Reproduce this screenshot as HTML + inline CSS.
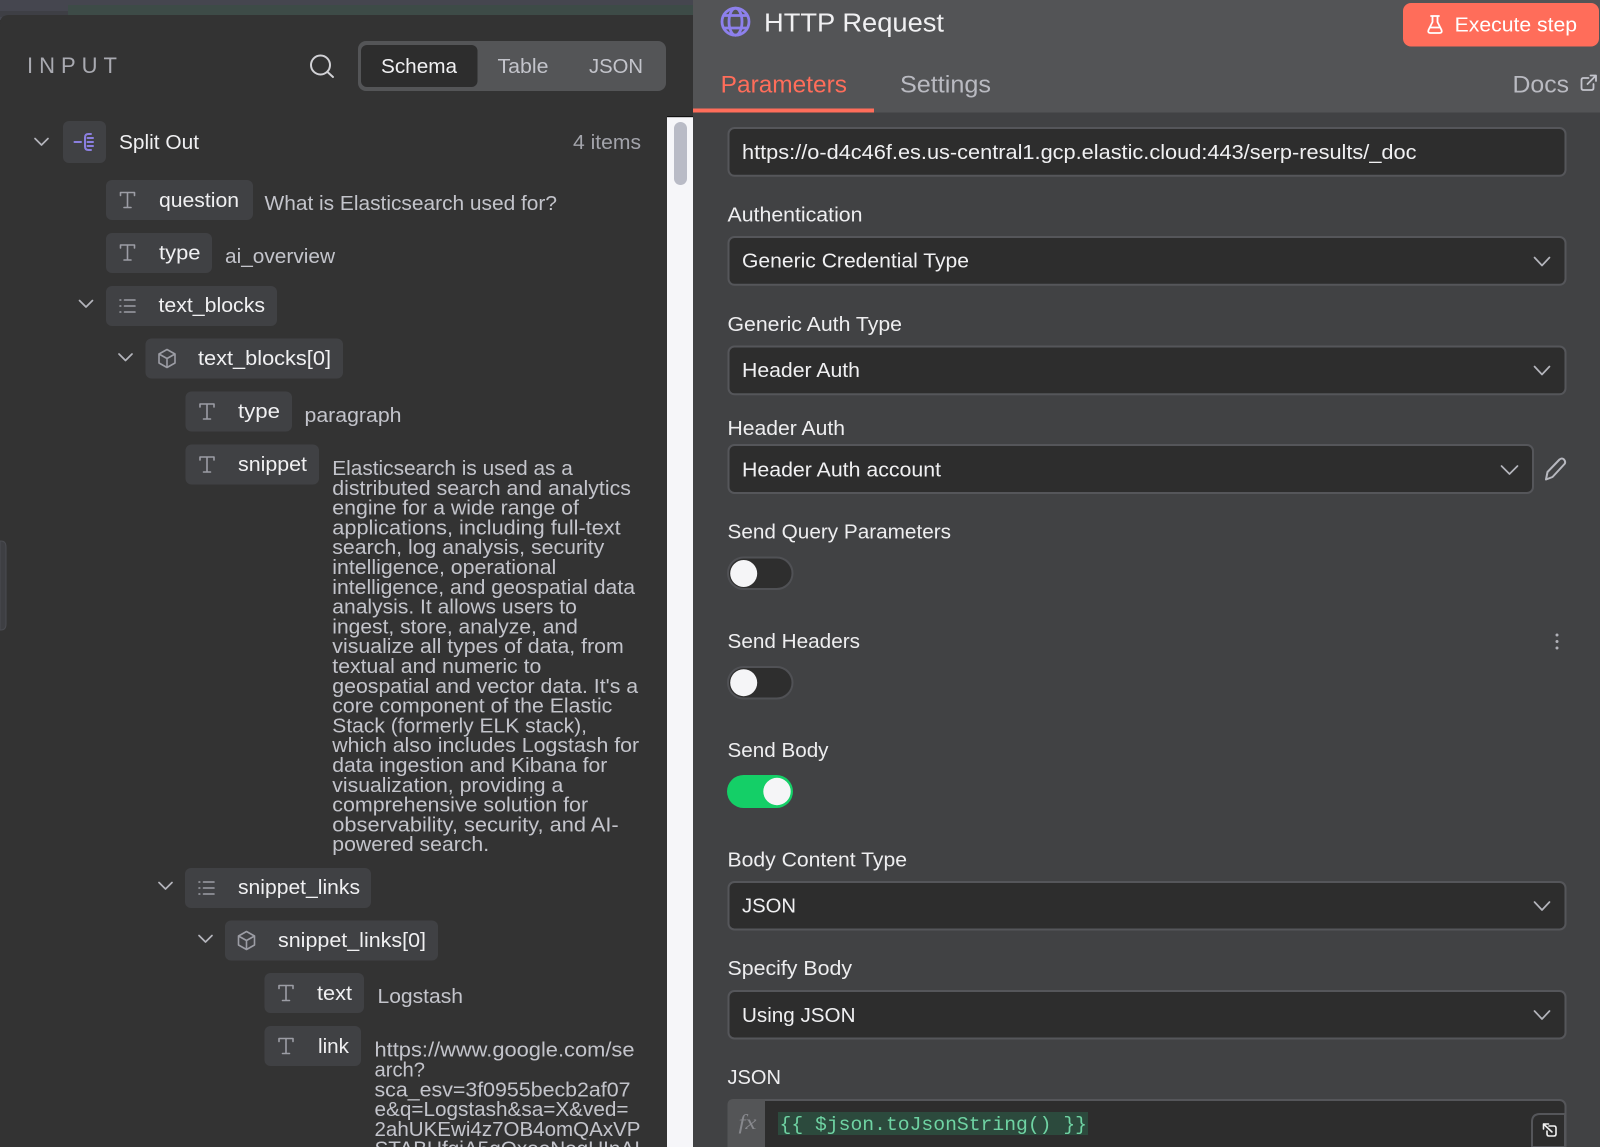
<!DOCTYPE html>
<html lang="en">
<head>
<meta charset="utf-8">
<title>HTTP Request</title>
<style>
html,body{margin:0;padding:0;background:#333;width:1600px;height:1147px;overflow:hidden}
svg{display:block}
text{font-family:"Liberation Sans",sans-serif;font-size:20.4px;fill:#f0f0f2;white-space:pre}
.v{fill:#c3c4cb}
.g{fill:#a3a4ab}
.l{fill:#eeeef0}
.i{fill:none;stroke:#9c9da5;stroke-width:1.6;stroke-linecap:round;stroke-linejoin:round}
.c{fill:none;stroke:#b4b5bc;stroke-width:1.7;stroke-linecap:round;stroke-linejoin:round}
.p{fill:#404144}
.s{fill:#2d2d2d;stroke:#55565a;stroke-width:2}
.t{fill:#2e2e2e;stroke:#505155;stroke-width:2}
</style>
</head>
<body>
<svg width="1600" height="1147" viewBox="0 0 1600 1147" xmlns="http://www.w3.org/2000/svg">
<!-- top strip -->
<rect x="0" y="0" width="1600" height="20" fill="#45464f"/>
<rect x="68" y="5" width="625" height="12" fill="#3d4b47"/>
<rect x="0" y="11" width="68" height="6" fill="#3e3f45"/>
<!-- left panel -->
<path d="M0 24 Q0 15 9 15 H693 V1147 H0 Z" fill="#333333"/>
<!-- left handle -->
<path d="M0 541 H1 Q6 541 6 547 V624 Q6 630 1 630 H0 Z" fill="#3e3f43" stroke="#4a4b50" stroke-width="1"/>
<!-- white scroll area -->
<rect x="667" y="116.500" width="26" height="1031" fill="#f6f6f9"/>
<rect x="667" y="116" width="26" height="1.200" fill="#111"/>
<rect x="674" y="122" width="13" height="63" rx="6.500" fill="#b9bbc6"/>
<!-- input header -->
<text x="27" y="73" style="font-size:22px;fill:#a9aab1" textLength="90" lengthAdjust="spacing">INPUT</text>
<circle cx="320.500" cy="65" r="9.500" fill="none" stroke="#d2d2d6" stroke-width="2"/>
<path d="M327.500 72 L333 77" fill="none" stroke="#d2d2d6" stroke-width="2" stroke-linecap="round"/>
<rect x="358" y="41" width="308" height="50" rx="8" fill="#545557"/>
<rect x="361" y="45" width="116.500" height="42" rx="6" fill="#2d2d2d"/>
<text x="381" y="73" textLength="76" lengthAdjust="spacingAndGlyphs">Schema</text>
<text x="497.500" y="73" class="v" textLength="51" lengthAdjust="spacingAndGlyphs">Table</text>
<text x="589" y="73" class="v" textLength="54" lengthAdjust="spacingAndGlyphs">JSON</text>

<!-- tree -->
<path class="c" d="M35 138.500 L41.500 145 L48 138.500"/>
<rect x="63" y="121" width="43" height="42" rx="6" class="p"/>
<path d="M74.500 142 H81 M91 134 H88.500 Q85 134 85 137.500 V146.500 Q85 150 88.500 150 H91 M87.500 138 H93 M87.500 142 H93 M87.500 146 H93" fill="none" stroke="#8b7fe0" stroke-width="2" stroke-linecap="round"/>
<text x="119" y="149" textLength="80" lengthAdjust="spacingAndGlyphs">Split Out</text>
<text x="573" y="149" class="g" textLength="68" lengthAdjust="spacingAndGlyphs">4 items</text>

<!-- question -->
<rect x="106" y="180" width="147" height="40" rx="6" class="p"/>
<path class="i" d="M120.500 195.500 V192.500 H134.500 V195.500 M127.500 192.500 V207.500 M124 207.500 H131"/>
<text x="159" y="207" textLength="80" lengthAdjust="spacingAndGlyphs">question</text>
<text x="264.500" y="210" class="v" textLength="292.500" lengthAdjust="spacingAndGlyphs">What is Elasticsearch used for?</text>
<!-- type -->
<rect x="106" y="233" width="106" height="40" rx="6" class="p"/>
<path class="i" d="M120.500 248 V245 H134.500 V248 M127.500 245 V260 M124 260 H131"/>
<text x="159" y="259.500" textLength="41.500" lengthAdjust="spacingAndGlyphs">type</text>
<text x="225" y="263" class="v" textLength="110" lengthAdjust="spacingAndGlyphs">ai_overview</text>
<!-- text_blocks -->
<path class="c" d="M79.500 300.500 L86 307 L92.500 300.500"/>
<rect x="106" y="286" width="171" height="40" rx="6" class="p"/>
<path class="i" d="M124.500 300 H135 M124.500 306 H135 M124.500 312 H135 M120 300 H120.800 M120 306 H120.800 M120 312 H120.800"/>
<text x="158.500" y="312" textLength="106.500" lengthAdjust="spacingAndGlyphs">text_blocks</text>
<!-- text_blocks[0] -->
<path class="c" d="M119 354 L125.500 360.500 L132 354"/>
<rect x="145.500" y="338.500" width="197.500" height="40" rx="6" class="p"/>
<path class="i" d="M167 349.500 L175 354 V363 L167 367.500 L159 363 V354 Z M159 354 L167 358.500 L175 354 M167 358.500 V367.500"/>
<text x="198" y="365" textLength="133" lengthAdjust="spacingAndGlyphs">text_blocks[0]</text>
<!-- type paragraph -->
<rect x="185.500" y="391.500" width="106.500" height="40" rx="6" class="p"/>
<path class="i" d="M200 407 V404 H214 V407 M207 404 V419 M203.500 419 H210.500"/>
<text x="238" y="418" textLength="42" lengthAdjust="spacingAndGlyphs">type</text>
<text x="304.500" y="422" class="v" textLength="97" lengthAdjust="spacingAndGlyphs">paragraph</text>
<!-- snippet -->
<rect x="185.500" y="444.500" width="133.500" height="40" rx="6" class="p"/>
<path class="i" d="M200 460 V457 H214 V460 M207 457 V472 M203.500 472 H210.500"/>
<text x="238" y="471" textLength="69" lengthAdjust="spacingAndGlyphs">snippet</text>
<g>
<text x="332.300" y="475" class="v" textLength="240.500" lengthAdjust="spacingAndGlyphs">Elasticsearch is used as a</text>
<text x="332.300" y="494.800" class="v" textLength="298.600" lengthAdjust="spacingAndGlyphs">distributed search and analytics</text>
<text x="332.300" y="514.600" class="v" textLength="246.600" lengthAdjust="spacingAndGlyphs">engine for a wide range of</text>
<text x="332.300" y="534.400" class="v" textLength="288.400" lengthAdjust="spacingAndGlyphs">applications, including full-text</text>
<text x="332.300" y="554.200" class="v" textLength="272" lengthAdjust="spacingAndGlyphs">search, log analysis, security</text>
<text x="332.300" y="574" class="v" textLength="224" lengthAdjust="spacingAndGlyphs">intelligence, operational</text>
<text x="332.300" y="593.800" class="v" textLength="302.700" lengthAdjust="spacingAndGlyphs">intelligence, and geospatial data</text>
<text x="332.300" y="613.600" class="v" textLength="244.500" lengthAdjust="spacingAndGlyphs">analysis. It allows users to</text>
<text x="332.300" y="633.400" class="v" textLength="245.500" lengthAdjust="spacingAndGlyphs">ingest, store, analyze, and</text>
<text x="332.300" y="653.200" class="v" textLength="291.500" lengthAdjust="spacingAndGlyphs">visualize all types of data, from</text>
<text x="332.300" y="673" class="v" textLength="209" lengthAdjust="spacingAndGlyphs">textual and numeric to</text>
<text x="332.300" y="692.800" class="v" textLength="305.800" lengthAdjust="spacingAndGlyphs">geospatial and vector data. It's a</text>
<text x="332.300" y="712.600" class="v" textLength="280" lengthAdjust="spacingAndGlyphs">core component of the Elastic</text>
<text x="332.300" y="732.400" class="v" textLength="254.700" lengthAdjust="spacingAndGlyphs">Stack (formerly ELK stack),</text>
<text x="332.300" y="752.200" class="v" textLength="306.800" lengthAdjust="spacingAndGlyphs">which also includes Logstash for</text>
<text x="332.300" y="772" class="v" textLength="275" lengthAdjust="spacingAndGlyphs">data ingestion and Kibana for</text>
<text x="332.300" y="791.800" class="v" textLength="231" lengthAdjust="spacingAndGlyphs">visualization, providing a</text>
<text x="332.300" y="811.600" class="v" textLength="255.800" lengthAdjust="spacingAndGlyphs">comprehensive solution for</text>
<text x="332.300" y="831.400" class="v" textLength="286.400" lengthAdjust="spacingAndGlyphs">observability, security, and AI-</text>
<text x="332.300" y="851.200" class="v" textLength="156.800" lengthAdjust="spacingAndGlyphs">powered search.</text>
</g>
<!-- snippet_links -->
<path class="c" d="M159 882.500 L165.500 889 L172 882.500"/>
<rect x="185" y="868" width="186" height="40" rx="6" class="p"/>
<path class="i" d="M203.500 882 H214 M203.500 888 H214 M203.500 894 H214 M199 882 H199.800 M199 888 H199.800 M199 894 H199.800"/>
<text x="238" y="894" textLength="122" lengthAdjust="spacingAndGlyphs">snippet_links</text>
<!-- snippet_links[0] -->
<path class="c" d="M199 935.500 L205.500 942 L212 935.500"/>
<rect x="225" y="920.500" width="213" height="40" rx="6" class="p"/>
<path class="i" d="M246.500 931.500 L254.500 936 V945 L246.500 949.500 L238.500 945 V936 Z M238.500 936 L246.500 940.500 L254.500 936 M246.500 940.500 V949.500"/>
<text x="278" y="947" textLength="148" lengthAdjust="spacingAndGlyphs">snippet_links[0]</text>
<!-- text -->
<rect x="264.500" y="973" width="99.500" height="40" rx="6" class="p"/>
<path class="i" d="M279 988.500 V985.500 H293 V988.500 M286 985.500 V1000.500 M282.500 1000.500 H289.500"/>
<text x="317" y="1000" textLength="35" lengthAdjust="spacingAndGlyphs">text</text>
<text x="377.500" y="1003" class="v" textLength="85.500" lengthAdjust="spacingAndGlyphs">Logstash</text>
<!-- link -->
<rect x="264.500" y="1026" width="96.500" height="40" rx="6" class="p"/>
<path class="i" d="M279 1041.500 V1038.500 H293 V1041.500 M286 1038.500 V1053.500 M282.500 1053.500 H289.500"/>
<text x="318" y="1053" textLength="31" lengthAdjust="spacingAndGlyphs">link</text>
<text x="374.500" y="1056.700" class="v" textLength="260" lengthAdjust="spacingAndGlyphs">https://www.google.com/se</text>
<text x="374.500" y="1076.500" class="v" textLength="50.500" lengthAdjust="spacingAndGlyphs">arch?</text>
<text x="374.500" y="1096.300" class="v" textLength="256" lengthAdjust="spacingAndGlyphs">sca_esv=3f0955becb2af07</text>
<text x="374.500" y="1116.100" class="v" textLength="254" lengthAdjust="spacingAndGlyphs">e&amp;q=Logstash&amp;sa=X&amp;ved=</text>
<text x="374.500" y="1135.900" class="v" textLength="266" lengthAdjust="spacingAndGlyphs">2ahUKEwi4z7OB4omQAxVP</text>
<text x="374.500" y="1155.700" class="v" textLength="265.500" lengthAdjust="spacingAndGlyphs">STABUfgiA5gQxooNogUInAI</text>

<!-- right panel -->
<rect x="693" y="0" width="907" height="1147" fill="#414244"/>
<rect x="693" y="0" width="907" height="112.500" fill="#535456"/>
<rect x="693" y="108.500" width="181" height="4" fill="#ff6d5a"/>
<!-- globe -->
<g fill="none" stroke="#8d80ec" stroke-width="2.800">
<circle cx="735.500" cy="21.700" r="13.500"/>
<ellipse cx="735.500" cy="21.700" rx="6.500" ry="13.500"/>
<path d="M724 15.500 H747 M724 28 H747"/>
</g>
<text x="764" y="31.700" style="font-size:25.500px" textLength="180" lengthAdjust="spacingAndGlyphs">HTTP Request</text>
<!-- execute -->
<rect x="1403" y="3" width="196" height="43.500" rx="8" fill="#ff6d5a"/>
<path d="M1431 16 H1439 M1432.500 16 V22 L1428.500 30 Q1427.500 33 1430.500 33 H1439.500 Q1442.500 33 1441.500 30 L1437.500 22 V16 M1430 27.500 H1440" fill="none" stroke="#fff" stroke-width="1.800" stroke-linecap="round" stroke-linejoin="round"/>
<text x="1454.700" y="31.700" style="fill:#fff" textLength="122.300" lengthAdjust="spacingAndGlyphs">Execute step</text>
<!-- tabs -->
<text x="720.700" y="92.700" style="font-size:24px;fill:#ff6d5a" textLength="126.300" lengthAdjust="spacingAndGlyphs">Parameters</text>
<text x="900" y="92.700" style="font-size:24px;fill:#b9bac1" textLength="91" lengthAdjust="spacingAndGlyphs">Settings</text>
<text x="1512.500" y="92.700" style="font-size:24px;fill:#b9bac1" textLength="56.500" lengthAdjust="spacingAndGlyphs">Docs</text>
<path d="M1588.500 78 H1583.500 Q1581.500 78 1581.500 80 V88 Q1581.500 90 1583.500 90 H1591.500 Q1593.500 90 1593.500 88 V84 M1587.500 84 L1595.500 76 M1590.500 75.500 H1596 V81" fill="none" stroke="#c3c4cc" stroke-width="1.800" stroke-linecap="round" stroke-linejoin="round"/>

<!-- url -->
<rect x="728.500" y="128" width="837" height="47.800" rx="6" class="s"/>
<text x="742" y="159" textLength="674.500" lengthAdjust="spacingAndGlyphs">https://o-d4c46f.es.us-central1.gcp.elastic.cloud:443/serp-results/_doc</text>
<!-- auth -->
<text x="727.500" y="221.700" class="l" textLength="135" lengthAdjust="spacingAndGlyphs">Authentication</text>
<rect x="728.500" y="237" width="837" height="47.800" rx="6" class="s"/>
<text x="742" y="267.700" textLength="227" lengthAdjust="spacingAndGlyphs">Generic Credential Type</text>
<path class="c" d="M1534.500 257.500 L1542 265.500 L1549.500 257.500"/>
<!-- generic auth -->
<text x="727.500" y="331" class="l" textLength="174.500" lengthAdjust="spacingAndGlyphs">Generic Auth Type</text>
<rect x="728.500" y="346.500" width="837" height="47.800" rx="6" class="s"/>
<text x="742" y="377" textLength="118" lengthAdjust="spacingAndGlyphs">Header Auth</text>
<path class="c" d="M1534.500 366.500 L1542 374.500 L1549.500 366.500"/>
<!-- header auth -->
<text x="727.500" y="435" class="l" textLength="117.500" lengthAdjust="spacingAndGlyphs">Header Auth</text>
<rect x="728.500" y="445" width="804.500" height="48" rx="6" class="s"/>
<text x="742" y="476.500" textLength="199" lengthAdjust="spacingAndGlyphs">Header Auth account</text>
<path class="c" d="M1501.500 466 L1509.500 474 L1517.500 466"/>
<path d="M1546 479.500 L1547.500 472 L1559.500 459.500 Q1562 457.500 1564 459.500 Q1566 462 1564.500 464 L1552.500 477 Z" fill="none" stroke="#b7b8bf" stroke-width="2" stroke-linejoin="round"/>
<!-- query -->
<text x="727.500" y="538.300" class="l" textLength="223.500" lengthAdjust="spacingAndGlyphs">Send Query Parameters</text>
<rect x="728" y="557.500" width="64.500" height="31.500" rx="15.750" class="t"/>
<circle cx="743.700" cy="573.500" r="13.500" fill="#f5f5f7"/>
<!-- headers -->
<text x="727.500" y="648" class="l" textLength="132.500" lengthAdjust="spacingAndGlyphs">Send Headers</text>
<circle cx="1557" cy="635" r="1.500" fill="#b0b1b8"/><circle cx="1557" cy="641.500" r="1.500" fill="#b0b1b8"/><circle cx="1557" cy="648" r="1.500" fill="#b0b1b8"/>
<rect x="728" y="667" width="64.500" height="31.500" rx="15.750" class="t"/>
<circle cx="743.700" cy="682.700" r="13.500" fill="#f5f5f7"/>
<!-- body -->
<text x="727.500" y="757" class="l" textLength="101" lengthAdjust="spacingAndGlyphs">Send Body</text>
<rect x="727" y="775" width="66" height="33" rx="16.500" fill="#14cf67"/>
<circle cx="777" cy="791.500" r="13.700" fill="#f5f5f7"/>
<!-- body content type -->
<text x="727.500" y="866.600" class="l" textLength="179.500" lengthAdjust="spacingAndGlyphs">Body Content Type</text>
<rect x="728.500" y="882" width="837" height="47.500" rx="6" class="s"/>
<text x="742" y="912.500" textLength="54" lengthAdjust="spacingAndGlyphs">JSON</text>
<path class="c" d="M1534.500 902 L1542 910 L1549.500 902"/>
<!-- specify body -->
<text x="727.500" y="975" class="l" textLength="124.500" lengthAdjust="spacingAndGlyphs">Specify Body</text>
<rect x="728.500" y="991" width="837" height="47.500" rx="6" class="s"/>
<text x="742" y="1022" textLength="113.500" lengthAdjust="spacingAndGlyphs">Using JSON</text>
<path class="c" d="M1534.500 1011 L1542 1019 L1549.500 1011"/>
<!-- json -->
<text x="727.500" y="1084" class="l" textLength="53.500" lengthAdjust="spacingAndGlyphs">JSON</text>
<rect x="728.500" y="1100" width="837" height="60" rx="6" class="s"/>
<path d="M765 1099 H734 Q727.500 1099 727.500 1105 V1147 H765 Z" fill="#545557"/>
<text x="738.500" y="1129" style="font-family:'Liberation Serif',serif;font-style:italic;font-size:21px;fill:#87888d" textLength="18" lengthAdjust="spacingAndGlyphs">fx</text>
<rect x="778" y="1112" width="310" height="23" fill="#2c4a3d"/>
<text x="779.500" y="1130" style="font-family:'Liberation Mono',monospace;font-size:19.700px;fill:#6fd3a3" textLength="307.500" lengthAdjust="spacingAndGlyphs">{{ $json.toJsonString() }}</text>
<path d="M1565 1114 H1540 Q1532 1114 1532 1122 V1147 H1565 Z" fill="#2d2d2d" stroke="#55565a" stroke-width="2"/>
<path d="M1549 1126 H1554 Q1556 1126 1556 1128 V1134 Q1556 1136 1554 1136 H1549 Q1547 1136 1547 1134 V1131 M1552 1132 L1543.500 1124 M1543.500 1129 V1124 H1548.500" fill="none" stroke="#f2f2f2" stroke-width="1.600" stroke-linecap="round" stroke-linejoin="round"/>
</svg>
</body>
</html>
